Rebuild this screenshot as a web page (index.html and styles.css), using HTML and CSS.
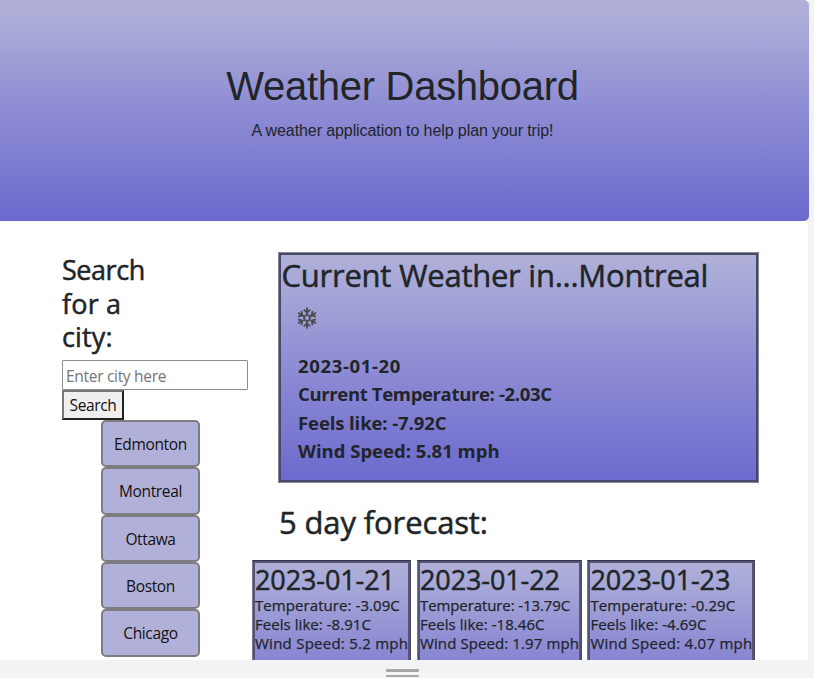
FILE: index.html
```html
<!DOCTYPE html>
<html lang="en">
<head>
<meta charset="utf-8">
<title>Weather Dashboard</title>
<link rel="stylesheet" href="styles.css">
</head>
<body>
<div class="viewport">
  <header class="hero">
    <h1>Weather Dashboard</h1>
    <p>A weather application to help plan your trip!</p>
  </header>
  <div class="content">
    <aside class="sidebar">
      <h3><span>Search</span><span class="loose">for a</span><span class="loose">city:</span></h3>
      <input type="text" placeholder="Enter city here">
      <button class="search">Search</button>
      <div class="cities">
        <button>Edmonton</button>
        <button>Montreal</button>
        <button>Ottawa</button>
        <button>Boston</button>
        <button>Chicago</button>
      </div>
    </aside>
    <main>
      <section class="current">
        <h2>Current Weather in...Montreal</h2>
        <svg class="snow" viewBox="0 0 20 22" width="20" height="22">
          <g id="arms">
            <path id="arm" d="M10 8.2V.6M6.7 2.6L10 5.6L13.3 2.6M8.4 8.2H11.6"/>
            <use href="#arm" transform="rotate(60 10 11)"/>
            <use href="#arm" transform="rotate(120 10 11)"/>
            <use href="#arm" transform="rotate(180 10 11)"/>
            <use href="#arm" transform="rotate(240 10 11)"/>
            <use href="#arm" transform="rotate(300 10 11)"/>
          </g>
        </svg>
        <ul>
          <li class="date">2023-01-20</li>
          <li class="temp">Current Temperature: -2.03C</li>
          <li>Feels like: -7.92C</li>
          <li class="wind">Wind Speed: 5.81 mph</li>
        </ul>
      </section>
      <h2 class="forecast-title">5 day forecast:</h2>
      <div class="forecast">
        <article class="first"><h3>2023-01-21</h3><p>Temperature: -3.09C</p><p>Feels like: -8.91C</p><p>Wind Speed: 5.2 mph</p></article>
        <article class="second"><h3>2023-01-22</h3><p>Temperature: -13.79C</p><p>Feels like: -18.46C</p><p>Wind Speed: 1.97 mph</p></article>
        <article class="third"><h3>2023-01-23</h3><p>Temperature: -0.29C</p><p>Feels like: -4.69C</p><p>Wind Speed: 4.07 mph</p></article>
      </div>
    </main>
  </div>
</div>
<div class="resizer"><i></i><i></i></div>
</body>
</html>
```
FILE: styles.css
```css
* { box-sizing: border-box; }
body { margin: 0; height: 678px; overflow: hidden; background: #f1f3f5; color: #212529; font: 400 15.5px/24px "Open Sans", sans-serif; }
h1, h2, h3, p, ul { margin: 0; padding: 0; font-weight: 500; }
.viewport { width: 808px; height: 660px; background: #fff; }
.hero { width: 809px; height: 221px; padding: 62px 4px 0 0; border-radius: 0 5px 5px 0; text-align: center; font-family: "Liberation Sans", sans-serif; background: linear-gradient(#b1b0d8, #a7a8d8 15%, #9391d4 43%, #6b69ce); }
.hero h1 { font-size: 40px; line-height: 48px; font-weight: 400; letter-spacing: -.28px; }
.hero p { margin-top: 9px; font-size: 16px; line-height: 24px; font-weight: 400; letter-spacing: -.09px; }
.content { display: flex; height: 439px; overflow: hidden; padding: 31px 0 0 62px; }
.sidebar { width: 190px; flex: none; }
.sidebar h3, .current h2, .forecast-title, .forecast h3 { -webkit-text-stroke: .5px #212529; }
.sidebar h3 { margin-top: 1px; font-size: 27px; line-height: 33.6px; letter-spacing: -.45px; }
.sidebar h3 span { display: block; }
.sidebar h3 .loose { letter-spacing: .15px; }
.sidebar input { display: block; width: 186px; height: 30px; margin-top: 6px; padding: 2px 3px 0; border: 1px solid #8c8c8c; border-radius: 1px; font: inherit; letter-spacing: -.3px; }
.sidebar input::placeholder { color: #757575; }
button { display: block; padding: 0; font: inherit; color: #111; letter-spacing: -.35px; }
.search { width: 62px; height: 30px; background: #efefef; border: 2px solid; border-color: #767676 #222 #222 #767676; }
.cities { width: 99px; margin-left: 39px; }
.cities button { width: 99px; height: 47.4px; padding-top: .5px; background: #b1b0d8; border: 2px solid #7d7d80; border-radius: 5px; }
main { width: 507px; flex: none; }
.current { width: 481px; height: 231px; margin-left: 26px; }
.current, .forecast article { border: 1px solid #85859a; padding: 2px; box-shadow: inset 0 0 0 2px #484869; background: linear-gradient(#b1b0d8, #a7a8d8 15%, #9391d4 43%, #6b69ce) border-box; }
.forecast article { border-color: #34344a #4a4a60 #4a4a60 #77778c; box-shadow: inset 0 0 0 2px #545478; }
.current h2, .forecast-title { font-size: 31px; line-height: 38px; letter-spacing: -.25px; white-space: nowrap; }
.current h2 { padding: 1px 0 0 .5px; }
.snow { display: block; margin: 13px 0 0 15.5px; }
#arms { fill: none; stroke: #4b4b50; stroke-width: 1.8; }
.current ul { list-style: none; margin: 23px 0 0 17px; font-size: 18.5px; line-height: 28.4px; letter-spacing: -.1px; }
.current li { font-weight: 700; }
.current .date { letter-spacing: .65px; }
.current .temp { letter-spacing: -.35px; }
.current .wind { letter-spacing: 0; }
.forecast-title { margin: 20px 0 0 27px; letter-spacing: -.13px; }
.forecast { display: flex; gap: 6px; margin-top: 19px; }
.forecast article { height: 170px; flex: none; white-space: nowrap; }
.first { width: 159px; }
.second { width: 165px; }
.third { width: 168px; margin-left: -.6px; }
.forecast h3 { font-size: 27px; line-height: 33px; letter-spacing: -.1px; }
.forecast p { font-size: 15px; line-height: 19.2px; letter-spacing: .05px; -webkit-text-stroke: .25px #212529; }
.forecast p:nth-of-type(1) { letter-spacing: .07px; }
.forecast .second p:nth-of-type(1) { letter-spacing: -.1px; }
.forecast p:nth-of-type(3) { letter-spacing: .25px; }
.forecast .second p:nth-of-type(3) { letter-spacing: .1px; }
.resizer { height: 18px; width: 805px; display: flex; flex-direction: column; align-items: center; gap: 3px; padding-top: 9px; }
.resizer i { width: 33px; height: 2.5px; background: #a6a7a9; border-radius: 1px; }
```
